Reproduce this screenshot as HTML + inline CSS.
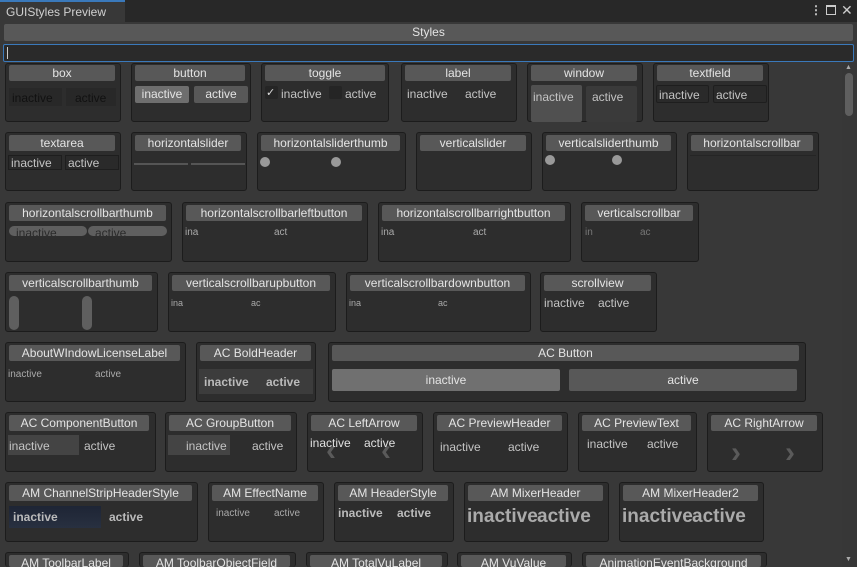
<!DOCTYPE html><html style="width:857px;height:567px;overflow:hidden"><head><style>
*{margin:0;padding:0;box-sizing:border-box}
body{width:857px;height:567px;overflow:hidden;background:#383838;font-family:"Liberation Sans",sans-serif;font-size:12px;color:#c4c4c4;position:relative}
div,span{position:absolute}
.b{background:#2d2d2d;border:1px solid #1c1c1c;border-radius:3px}
.h{background:#585858;color:#e4e4e4;height:16px;line-height:16px;text-align:center;border-radius:2px;white-space:nowrap}
.t{white-space:nowrap;line-height:14px}
.ar{font-size:30px;font-weight:bold;color:#5a5a5a;line-height:26px}
</style></head><body>
<div style="left:0;top:0;width:857px;height:22px;background:#282828"></div>
<div style="left:0;top:0;width:125px;height:22px;background:#383838;border-top:2px solid #3a79bb"></div>
<span class="t" style="left:6px;top:5px;color:#d0d0d0">GUIStyles Preview</span>
<span class="t" style="left:810px;top:3px;color:#ccc;font-weight:bold">⋮</span>
<div style="left:826px;top:5px;width:10px;height:10px;border:1px solid #ccc;border-top-width:2px"></div>
<span class="t" style="left:841px;top:3px;color:#ccc;font-size:14px">✕</span>
<div class="h" style="left:4px;top:24px;width:849px;height:17px;line-height:17px">Styles</div>
<div style="left:3px;top:44px;width:851px;height:18px;background:#2a2a2a;border:1px solid #3a79bb;border-radius:2px"></div>
<div style="left:7px;top:47px;width:1px;height:12px;background:#ccc"></div>
<div style="left:842px;top:63px;width:15px;height:504px;background:#373737"></div>
<div style="left:845px;top:73px;width:8px;height:43px;background:#5f5f5f;border-radius:4px"></div>
<span style="left:845px;top:64px;font-size:7px;color:#aaa">▲</span>
<span style="left:845px;top:556px;font-size:7px;color:#aaa">▼</span>

<!-- row1 -->
<div class="b" style="left:5px;top:63px;width:116px;height:59px"></div><div class="h" style="left:9px;top:65px;width:106px">box</div>
<div style="left:9px;top:88px;width:53px;height:18px;background:#282828"></div><div style="left:66px;top:88px;width:50px;height:18px;background:#282828"></div>
<span class="t" style="left:12px;top:91px;color:#111">inactive</span><span class="t" style="left:75px;top:91px;color:#111">active</span>
<div class="b" style="left:131px;top:63px;width:120px;height:59px"></div><div class="h" style="left:135px;top:65px;width:110px">button</div>
<div class="h" style="left:135px;top:86px;width:54px;height:17px;background:#6e6e6e">inactive</div><div class="h" style="left:194px;top:86px;width:54px;height:17px">active</div>
<div class="b" style="left:261px;top:63px;width:128px;height:59px"></div><div class="h" style="left:265px;top:65px;width:120px">toggle</div>
<div style="left:265px;top:86px;width:13px;height:13px;background:#252525;border-radius:2px"></div><span class="t" style="left:266px;top:86px;font-size:11px;color:#ddd">✓</span>
<span class="t" style="left:281px;top:87px">inactive</span>
<div style="left:329px;top:86px;width:13px;height:13px;background:#252525;border-radius:2px"></div><span class="t" style="left:345px;top:87px">active</span>
<div class="b" style="left:401px;top:63px;width:116px;height:59px"></div><div class="h" style="left:405px;top:65px;width:106px">label</div>
<span class="t" style="left:407px;top:87px">inactive</span><span class="t" style="left:465px;top:87px">active</span>
<div class="b" style="left:527px;top:63px;width:116px;height:59px"></div><div class="h" style="left:531px;top:65px;width:106px">window</div>
<div style="left:531px;top:85px;width:51px;height:37px;background:#505050;border-radius:2px"></div><div style="left:586px;top:86px;width:51px;height:36px;background:#3a3a3a;border-radius:2px"></div>
<span class="t" style="left:533px;top:90px">inactive</span><span class="t" style="left:592px;top:90px">active</span>
<div class="b" style="left:653px;top:63px;width:116px;height:59px"></div><div class="h" style="left:657px;top:65px;width:106px">textfield</div>
<div style="left:656px;top:85px;width:53px;height:18px;background:#2a2a2a;border:1px solid #1e1e1e;border-radius:2px"></div><div style="left:713px;top:85px;width:54px;height:18px;background:#2a2a2a;border:1px solid #1e1e1e;border-radius:2px"></div>
<span class="t" style="left:659px;top:88px">inactive</span><span class="t" style="left:716px;top:88px">active</span>

<!-- row2 -->
<div class="b" style="left:5px;top:132px;width:116px;height:59px"></div><div class="h" style="left:9px;top:135px;width:106px">textarea</div>
<div style="left:8px;top:155px;width:54px;height:15px;background:#2a2a2a;border:1px solid #1e1e1e"></div><div style="left:65px;top:155px;width:54px;height:15px;background:#2a2a2a;border:1px solid #1e1e1e"></div>
<span class="t" style="left:11px;top:156px">inactive</span><span class="t" style="left:68px;top:156px">active</span>
<div class="b" style="left:131px;top:132px;width:116px;height:59px"></div><div class="h" style="left:135px;top:135px;width:106px">horizontalslider</div>
<div style="left:134px;top:163px;width:54px;height:2px;background:#555"></div><div style="left:191px;top:163px;width:54px;height:2px;background:#555"></div>
<div class="b" style="left:257px;top:132px;width:149px;height:59px"></div><div class="h" style="left:261px;top:135px;width:139px">horizontalsliderthumb</div>
<div style="left:260px;top:157px;width:10px;height:10px;border-radius:50%;background:#999"></div><div style="left:331px;top:157px;width:10px;height:10px;border-radius:50%;background:#999"></div>
<div class="b" style="left:416px;top:132px;width:116px;height:59px"></div><div class="h" style="left:420px;top:135px;width:106px">verticalslider</div>
<div class="b" style="left:542px;top:132px;width:135px;height:59px"></div><div class="h" style="left:546px;top:135px;width:125px">verticalsliderthumb</div>
<div style="left:545px;top:155px;width:10px;height:10px;border-radius:50%;background:#999"></div><div style="left:612px;top:155px;width:10px;height:10px;border-radius:50%;background:#999"></div>
<div class="b" style="left:687px;top:132px;width:132px;height:59px"></div><div class="h" style="left:691px;top:135px;width:122px">horizontalscrollbar</div>
<div style="left:690px;top:155px;width:126px;height:1px;background:#252525"></div>

<!-- row3 -->
<div class="b" style="left:5px;top:202px;width:167px;height:60px"></div><div class="h" style="left:9px;top:205px;width:157px">horizontalscrollbarthumb</div>
<div style="left:9px;top:226px;width:78px;height:10px;background:#5f5f5f;border-radius:5px;overflow:hidden"><span class="t" style="left:7px;top:0;color:#2a2a2a">inactive</span></div>
<div style="left:88px;top:226px;width:79px;height:10px;background:#5f5f5f;border-radius:5px;overflow:hidden"><span class="t" style="left:7px;top:0;color:#2a2a2a">active</span></div>
<div class="b" style="left:182px;top:202px;width:186px;height:60px"></div><div class="h" style="left:186px;top:205px;width:176px">horizontalscrollbarleftbutton</div>
<span class="t" style="left:185px;top:226px;font-size:10px;color:#aaa">ina</span><span class="t" style="left:274px;top:226px;font-size:10px;color:#aaa">act</span>
<div class="b" style="left:378px;top:202px;width:193px;height:60px"></div><div class="h" style="left:382px;top:205px;width:183px">horizontalscrollbarrightbutton</div>
<span class="t" style="left:381px;top:226px;font-size:10px;color:#aaa">ina</span><span class="t" style="left:473px;top:226px;font-size:10px;color:#aaa">act</span>
<div class="b" style="left:581px;top:202px;width:118px;height:60px"></div><div class="h" style="left:585px;top:205px;width:108px">verticalscrollbar</div>
<span class="t" style="left:585px;top:226px;font-size:10px;color:#777">in</span><span class="t" style="left:640px;top:226px;font-size:10px;color:#777">ac</span>

<!-- row4 -->
<div class="b" style="left:5px;top:272px;width:153px;height:60px"></div><div class="h" style="left:9px;top:275px;width:143px">verticalscrollbarthumb</div>
<div style="left:9px;top:296px;width:10px;height:34px;background:#5f5f5f;border-radius:5px"></div><div style="left:82px;top:296px;width:10px;height:34px;background:#5f5f5f;border-radius:5px"></div>
<div class="b" style="left:168px;top:272px;width:168px;height:60px"></div><div class="h" style="left:172px;top:275px;width:158px">verticalscrollbarupbutton</div>
<span class="t" style="left:171px;top:296px;font-size:9px;color:#aaa">ina</span><span class="t" style="left:251px;top:296px;font-size:9px;color:#aaa">ac</span>
<div class="b" style="left:346px;top:272px;width:185px;height:60px"></div><div class="h" style="left:350px;top:275px;width:175px">verticalscrollbardownbutton</div>
<span class="t" style="left:349px;top:296px;font-size:9px;color:#aaa">ina</span><span class="t" style="left:438px;top:296px;font-size:9px;color:#aaa">ac</span>
<div class="b" style="left:540px;top:272px;width:117px;height:60px"></div><div class="h" style="left:544px;top:275px;width:107px">scrollview</div>
<span class="t" style="left:544px;top:296px">inactive</span><span class="t" style="left:598px;top:296px">active</span>

<!-- row5 -->
<div class="b" style="left:5px;top:342px;width:181px;height:60px"></div><div class="h" style="left:9px;top:345px;width:171px">AboutWIndowLicenseLabel</div>
<span class="t" style="left:8px;top:368px;font-size:10px;color:#aaa">inactive</span><span class="t" style="left:95px;top:368px;font-size:10px;color:#aaa">active</span>
<div class="b" style="left:196px;top:342px;width:120px;height:60px"></div><div class="h" style="left:200px;top:345px;width:111px">AC BoldHeader</div>
<div style="left:199px;top:369px;width:114px;height:25px;background:#3c3c3c"></div>
<span class="t" style="left:204px;top:375px;font-weight:bold;color:#bbb">inactive</span><span class="t" style="left:266px;top:375px;font-weight:bold;color:#bbb">active</span>
<div class="b" style="left:328px;top:342px;width:478px;height:60px"></div><div class="h" style="left:332px;top:345px;width:467px">AC Button</div>
<div class="h" style="left:332px;top:369px;width:228px;height:22px;line-height:22px;background:#707070">inactive</div><div class="h" style="left:569px;top:369px;width:228px;height:22px;line-height:22px">active</div>

<!-- row6 -->
<div class="b" style="left:5px;top:412px;width:151px;height:60px"></div><div class="h" style="left:9px;top:415px;width:140px">AC ComponentButton</div>
<div style="left:8px;top:435px;width:71px;height:20px;background:#444"></div>
<span class="t" style="left:9px;top:439px">inactive</span><span class="t" style="left:84px;top:439px">active</span>
<div class="b" style="left:165px;top:412px;width:132px;height:60px"></div><div class="h" style="left:169px;top:415px;width:122px">AC GroupButton</div>
<div style="left:168px;top:435px;width:62px;height:20px;background:#444"></div>
<span class="t" style="left:186px;top:439px">inactive</span><span class="t" style="left:252px;top:439px">active</span>
<div class="b" style="left:307px;top:412px;width:116px;height:60px"></div><div class="h" style="left:311px;top:415px;width:106px">AC LeftArrow</div>
<span class="ar" style="left:326px;top:438px">‹</span><span class="ar" style="left:381px;top:438px">‹</span>
<span class="t" style="left:310px;top:436px;color:#e0e0e0">inactive</span><span class="t" style="left:364px;top:436px;color:#e0e0e0">active</span>
<div class="b" style="left:433px;top:412px;width:135px;height:60px"></div><div class="h" style="left:437px;top:415px;width:125px">AC PreviewHeader</div>
<span class="t" style="left:440px;top:440px">inactive</span><span class="t" style="left:508px;top:440px">active</span>
<div class="b" style="left:578px;top:412px;width:119px;height:60px"></div><div class="h" style="left:582px;top:415px;width:109px">AC PreviewText</div>
<span class="t" style="left:587px;top:437px">inactive</span><span class="t" style="left:647px;top:437px">active</span>
<div class="b" style="left:707px;top:412px;width:116px;height:60px"></div><div class="h" style="left:711px;top:415px;width:106px">AC RightArrow</div>
<span class="ar" style="left:731px;top:440px">›</span><span class="ar" style="left:785px;top:440px">›</span>

<!-- row7 -->
<div class="b" style="left:5px;top:482px;width:193px;height:60px"></div><div class="h" style="left:9px;top:485px;width:183px">AM ChannelStripHeaderStyle</div>
<div style="left:9px;top:506px;width:92px;height:22px;background:linear-gradient(#1e2535,#283040)"></div>
<span class="t" style="left:13px;top:510px;font-weight:bold;color:#bbb">inactive</span><span class="t" style="left:109px;top:510px;font-weight:bold;color:#bbb">active</span>
<div class="b" style="left:208px;top:482px;width:116px;height:60px"></div><div class="h" style="left:212px;top:485px;width:106px">AM EffectName</div>
<span class="t" style="left:216px;top:507px;font-size:10px;color:#aaa">inactive</span><span class="t" style="left:274px;top:507px;font-size:10px;color:#aaa">active</span>
<div class="b" style="left:334px;top:482px;width:120px;height:60px"></div><div class="h" style="left:338px;top:485px;width:110px">AM HeaderStyle</div>
<span class="t" style="left:338px;top:506px;font-weight:bold;color:#bbb">inactive</span><span class="t" style="left:397px;top:506px;font-weight:bold;color:#bbb">active</span>
<div class="b" style="left:464px;top:482px;width:145px;height:60px"></div><div class="h" style="left:468px;top:485px;width:135px">AM MixerHeader</div>
<span class="t" style="left:467px;top:507px;font-size:19px;line-height:20px;font-weight:bold;color:#aaa">inactive</span><span class="t" style="left:537px;top:507px;font-size:19px;line-height:20px;font-weight:bold;color:#aaa">active</span>
<div class="b" style="left:619px;top:482px;width:145px;height:60px"></div><div class="h" style="left:623px;top:485px;width:135px">AM MixerHeader2</div>
<span class="t" style="left:622px;top:507px;font-size:19px;line-height:20px;font-weight:bold;color:#aaa">inactive</span><span class="t" style="left:692px;top:507px;font-size:19px;line-height:20px;font-weight:bold;color:#aaa">active</span>

<!-- row8 -->
<div class="b" style="left:5px;top:552px;width:124px;height:15px;border-bottom:none"></div><div class="h" style="left:9px;top:555px;width:114px;height:12px;overflow:hidden">AM ToolbarLabel</div>
<div class="b" style="left:139px;top:552px;width:157px;height:15px;border-bottom:none"></div><div class="h" style="left:143px;top:555px;width:147px;height:12px;overflow:hidden">AM ToolbarObjectField</div>
<div class="b" style="left:306px;top:552px;width:142px;height:15px;border-bottom:none"></div><div class="h" style="left:310px;top:555px;width:132px;height:12px;overflow:hidden">AM TotalVuLabel</div>
<div class="b" style="left:457px;top:552px;width:115px;height:15px;border-bottom:none"></div><div class="h" style="left:461px;top:555px;width:105px;height:12px;overflow:hidden">AM VuValue</div>
<div class="b" style="left:582px;top:552px;width:185px;height:15px;border-bottom:none"></div><div class="h" style="left:586px;top:555px;width:175px;height:12px;overflow:hidden">AnimationEventBackground</div>
</body></html>
